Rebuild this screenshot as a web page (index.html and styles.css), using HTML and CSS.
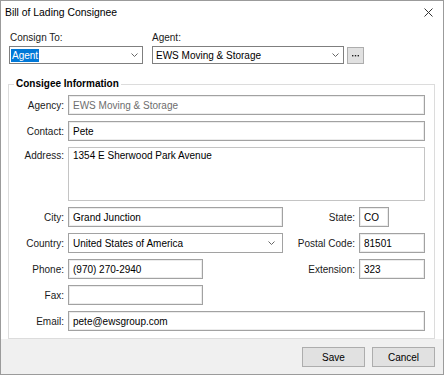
FILE: index.html
```html
<!DOCTYPE html>
<html lang="en">
<head>
  <meta charset="UTF-8" />
  <title>Bill of Lading Consignee</title>
  <link rel="stylesheet" href="styles.css">
</head>
<body>

  <div class="window">
    <div class="titlebar">
      <span>Bill of Lading Consignee</span>
      <svg class="close" width="9" height="9" viewBox="0 0 9 9">
        <path d="M0.5 0.5 L8.5 8.5 M8.5 0.5 L0.5 8.5" stroke="#333" stroke-width="1" fill="none"/>
      </svg>
    </div>

    <div class="consign">
      <div class="pick">
        <span class="cap first">Consign To:</span>
        <div class="combo w-consign">
          <span class="sel">Agent</span>
          <svg class="chev" width="7" height="4" viewBox="0 0 7 4"><path d="M0.5 0.5 L3.5 3.5 L6.5 0.5" stroke="#666" fill="none"/></svg>
        </div>
      </div>
      <div class="pick">
        <span class="cap">Agent:</span>
        <div class="pick-row">
          <div class="combo w-agent">
            <span class="txt">EWS Moving &amp; Storage</span>
            <svg class="chev" width="7" height="4" viewBox="0 0 7 4"><path d="M0.5 0.5 L3.5 3.5 L6.5 0.5" stroke="#666" fill="none"/></svg>
          </div>
          <button class="more" type="button">
            <svg width="7" height="2" viewBox="0 0 7 2"><rect x="0" y="0" width="1.4" height="1.4" fill="#222"/><rect x="2.8" y="0" width="1.4" height="1.4" fill="#222"/><rect x="5.6" y="0" width="1.4" height="1.4" fill="#222"/></svg>
          </button>
        </div>
      </div>
    </div>

    <fieldset class="group">
      <legend>Consigee Information</legend>
      <div class="form">
        <label class="lbl">Agency:</label>
        <input class="field span3 disabled" type="text" value="EWS Moving &amp; Storage" readonly />

        <label class="lbl">Contact:</label>
        <input class="field span3" type="text" value="Pete" />

        <label class="lbl top">Address:</label>
        <textarea class="field area span3">1354 E Sherwood Park Avenue</textarea>

        <label class="lbl">City:</label>
        <input class="field c2" type="text" value="Grand Junction" />
        <label class="lbl c3">State:</label>
        <input class="field c4 tiny" type="text" value="CO" />

        <label class="lbl">Country:</label>
        <div class="combo c2 country">
          <span class="txt">United States of America</span>
          <svg class="chev" width="7" height="4" viewBox="0 0 7 4"><path d="M0.5 0.5 L3.5 3.5 L6.5 0.5" stroke="#666" fill="none"/></svg>
        </div>
        <label class="lbl c3">Postal Code:</label>
        <input class="field c4" type="text" value="81501" />

        <label class="lbl">Phone:</label>
        <input class="field c2 short" type="text" value="(970) 270-2940" />
        <label class="lbl c3">Extension:</label>
        <input class="field c4" type="text" value="323" />

        <label class="lbl">Fax:</label>
        <input class="field c2 short" type="text" value="" />

        <label class="lbl">Email:</label>
        <input class="field span3" type="text" value="pete@ewsgroup.com" />
      </div>
    </fieldset>

    <div class="footer">
      <button class="btn" type="button">Save</button>
      <button class="btn" type="button">Cancel</button>
    </div>
  </div>

</body>
</html>
```

FILE: styles.css
```css
body {
  margin: 0;
  background-color: #fff;
}
.window {
  width: 444px;
  height: 375px;
  box-sizing: border-box;
  border: 1px solid #9b9b9b;
  background-color: #fff;
  display: flex;
  flex-direction: column;
  font-family: "Liberation Sans", Arial, sans-serif;
  font-size: 10px;
  color: #1a1a1a;
}
.titlebar {
  height: 23px;
  display: flex;
  align-items: center;
  justify-content: space-between;
  padding: 0 10px 0 4px;
  font-size: 10.4px;
  color: #000;
}
.close {
  display: block;
}
.consign {
  display: flex;
  gap: 9px;
  padding: 8px 0 0 8px;
}
.pick {
  display: flex;
  flex-direction: column;
  gap: 2px;
}
.cap {
  line-height: 12px;
}
.cap.first {
  padding-left: 1px;
}
.pick-row {
  display: flex;
  align-items: center;
  gap: 3px;
}
.combo {
  box-sizing: border-box;
  height: 18px;
  border: 1px solid #7f7f7f;
  background-color: #fff;
  display: flex;
  align-items: center;
  justify-content: space-between;
  padding: 0 4px 0 1px;
  color: #000;
}
.combo .chev {
  display: block;
  flex-shrink: 0;
}
.w-consign {
  width: 134px;
}
.w-agent {
  width: 192px;
  padding-left: 3px;
}
.sel {
  background-color: #0078d7;
  color: #fff;
  line-height: 13px;
  padding: 0 1px;
}
.more {
  box-sizing: border-box;
  width: 17px;
  height: 17px;
  padding: 0;
  border: 1px solid #adadad;
  background-color: #e1e1e1;
  display: flex;
  align-items: center;
  justify-content: center;
}
.more svg {
  display: block;
  margin-top: 1px;
}
.group {
  margin: 14px 8px 0 7px;
  padding: 0 9px 7px 0;
  border: 1px solid #dcdcdc;
  min-width: 0;
}
.group legend {
  margin-left: 5px;
  padding: 0 2px;
  font-weight: bold;
  line-height: 12px;
  color: #000;
}
.form {
  display: grid;
  grid-template-columns: 55px 215px 1fr 66px;
  column-gap: 4px;
  row-gap: 6px;
  padding-top: 5px;
}
.lbl {
  grid-column: 1;
  text-align: right;
  align-self: center;
  white-space: nowrap;
}
.lbl.top {
  align-self: start;
  padding-top: 3px;
}
.field {
  box-sizing: border-box;
  width: 100%;
  height: 20px;
  margin: 0;
  padding: 0 4px;
  border: 1px solid #a2a2a2;
  box-shadow: inset 0 0 0 1px #ececec;
  font-family: inherit;
  font-size: 10px;
  color: #000;
  background-color: #fff;
  outline: none;
}
.field.disabled {
  color: #6d6d6d;
}
.area {
  height: 54px;
  padding: 2px 4px;
  line-height: 12px;
  resize: none;
  border-color: #c4c4c4;
  box-shadow: none;
}
.span3 {
  grid-column: 2 / 5;
}
.c2 {
  grid-column: 2;
}
.c3 {
  grid-column: 3;
}
.c4 {
  grid-column: 4;
}
.short {
  width: 135px;
}
.tiny {
  width: 30px;
}
.country {
  height: 20px;
  border-color: #a2a2a2;
  padding: 0 7px 0 4px;
}
.footer {
  flex: 1;
  background-color: #f0f0f0;
  display: flex;
  justify-content: flex-end;
  align-items: flex-start;
  gap: 7px;
  padding: 8px 8px 0 0;
}
.btn {
  box-sizing: border-box;
  width: 63px;
  height: 20px;
  padding: 0;
  border: 1px solid #adadad;
  background-color: #e1e1e1;
  font-family: inherit;
  font-size: 10px;
  color: #000;
}
```
